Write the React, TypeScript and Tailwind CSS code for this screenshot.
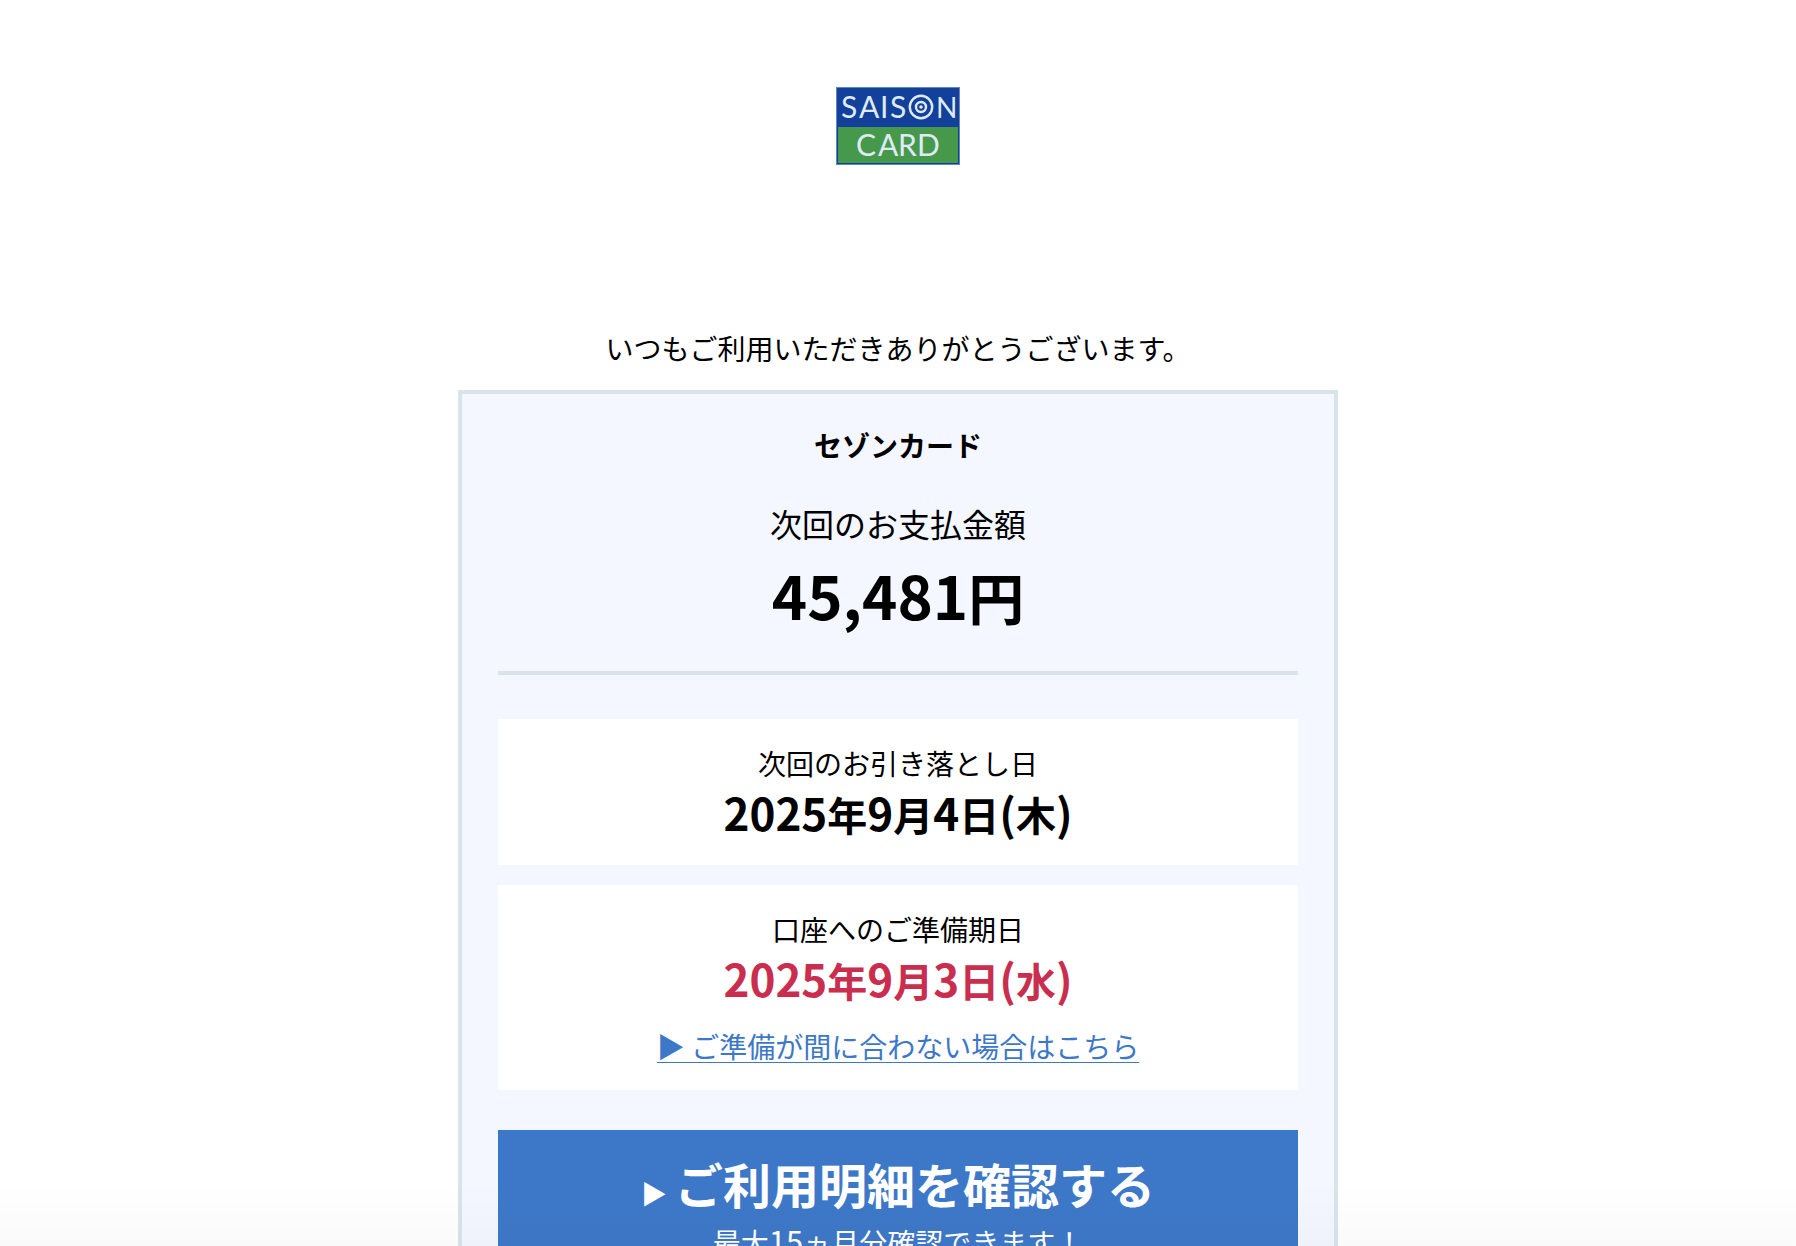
import React from 'react';
import { clsx } from 'clsx';

const schedule = [
  { label: '次回のお引き落とし日', date: '2025年9月4日(木)', urgent: false },
  { label: '口座へのご準備期日', date: '2025年9月3日(水)', urgent: true, link: '▶ ご準備が間に合わない場合はこちら' },
];

function Logo() {
  return (
    <svg width="124" height="78" viewBox="0 0 124 78" role="img" aria-label="SAISON CARD">
      <rect width="124" height="78" fill="#5f88bf" />
      <rect x="1" y="1" width="122" height="76" fill="#12409a" />
      <rect x="2" y="40" width="120" height="36" fill="#46994a" />
      <g fill="#dfeaf6" fontFamily="Lato" fontSize="30">
        <text x="5 23 44 54" y="31">SAIS</text>
        <text x="100" y="31" fontSize="28">N</text>
        <text x="20 42 62 81" y="69">CARD</text>
      </g>
      <g fill="none" stroke="#dfeaf6" strokeWidth="2.4">
        <circle cx="85" cy="20" r="11.2" />
        <circle cx="85" cy="20" r="5" />
      </g>
      <circle cx="85" cy="20" r="1.8" fill="#dfeaf6" />
    </svg>
  );
}

// Latin digits are set a little larger than the kanji around them
function Figures({ text, className }: { text: string; className: string }) {
  return (
    <>
      {text.split(/([0-9,()]+)/).map((part, i) =>
        i % 2 ? <span key={i} className={clsx('leading-none', className)}>{part}</span> : part
      )}
    </>
  );
}

export default function App() {
  return (
    <div className="relative h-screen overflow-hidden bg-white font-['Noto_Sans_CJK_JP',sans-serif] text-black text-center">
      <header className="flex justify-center pt-[87px]">
        <Logo />
      </header>

      <main className="mx-auto w-full max-w-[880px]">
        <p className="pt-[163px] pb-[22px] text-[28px] leading-10">いつもご利用いただきありがとうございます。</p>

        <section className="border-4 border-[#d8e4ea] bg-[#f4f7ff] px-9 pb-10">
          <h1 className="pt-[31px] text-[28px] leading-10 font-bold">セゾンカード</h1>
          <h2 className="pt-[34px] text-[32px] leading-12">次回のお支払金額</h2>
          <p className="pt-3 text-[56px] leading-[74px] font-bold">
            <Figures text="45,481円" className="text-[60px]" />
          </p>
          <hr className="mt-[38px] mb-11 border-0 h-1 bg-[#d8e4ea]" />

          <div className="space-y-5">
            {schedule.map((item) => (
              <div key={item.label} className="bg-white px-4 py-6">
                <h3 className="text-[28px] leading-10">{item.label}</h3>
                <p className={clsx('mt-1 text-[40px] leading-[54px] font-bold', item.urgent && 'text-[#c92e4f]')}>
                  <Figures text={item.date} className="text-[44px]" />
                </p>
                {item.link && (
                  <a href="#prepare" className="mt-[19px] block text-[28px] leading-10 text-[#3d78c8] underline decoration-1 underline-offset-4">
                    {item.link}
                  </a>
                )}
              </div>
            ))}
          </div>

          <a href="#statement" className="mt-10 block bg-[#3d78c8] pt-[17px] pb-6 text-white">
            <span className="block text-[48px] leading-[72px] font-bold">
              <span className="mr-2 text-[26px] leading-none font-normal">▶</span>
              ご利用明細を確認する
            </span>
            <span className="mt-[3px] block text-[28px] leading-10">
              最大<Figures text="15" className="text-[31px]" />ヵ月分確認できます！
            </span>
          </a>
        </section>
      </main>

      <div className="pointer-events-none absolute inset-x-0 bottom-0 h-16 bg-linear-to-b from-transparent to-black/2" />
    </div>
  );
}
